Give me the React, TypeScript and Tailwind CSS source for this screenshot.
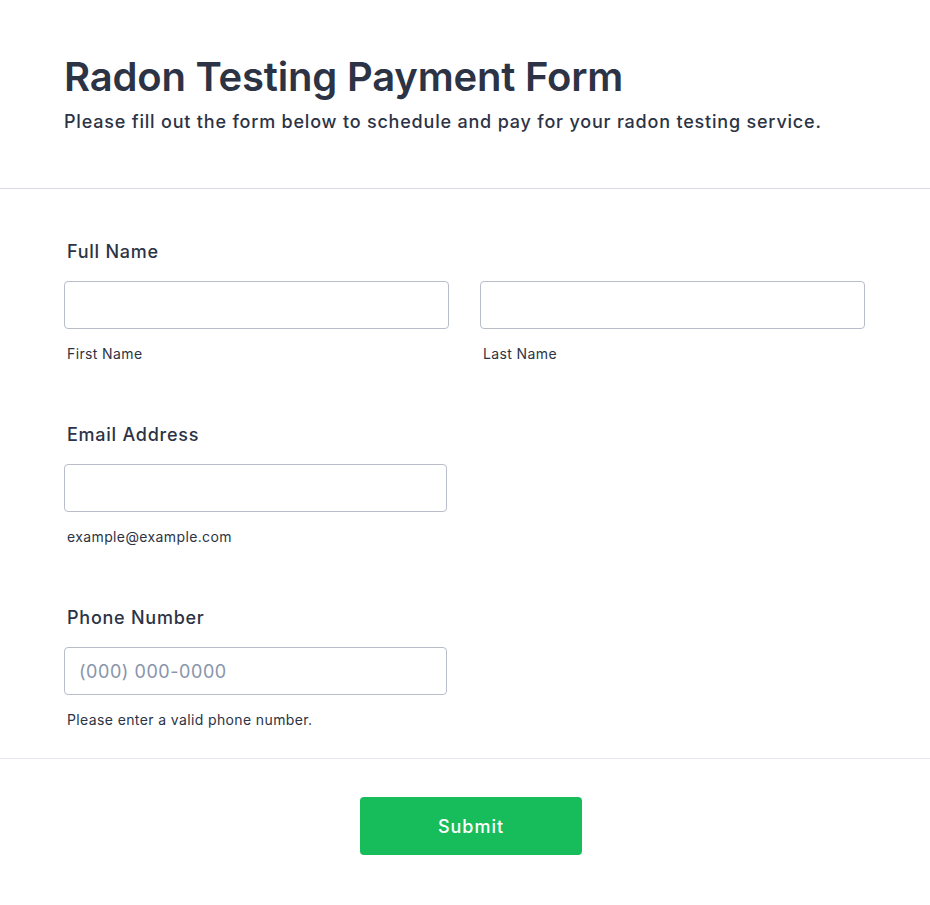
import React from 'react';

const font = { fontFamily: 'Inter, "Noto Sans", sans-serif' };

const Field: React.FC<{ label: string; children: React.ReactNode }> = ({ label, children }) => (
  <div className="mb-[55px] last:mb-0">
    <label className="block pl-[3px] text-[18px] leading-[31px] font-medium tracking-[0.75px] text-[#2c3345]">
      {label}
    </label>
    <div className="mt-[14px]">{children}</div>
  </div>
);

const inputClass =
  'block w-full h-[48px] rounded-[4px] border border-[#b8bdc9] bg-white px-[14px] text-[18px] tracking-[0.55px] text-[#2c3345] outline-none placeholder:text-[#8894ab]';

const SubLabel: React.FC<{ text: string }> = ({ text }) => (
  <div className="mt-[15px] pl-[3px] text-[14px] leading-[20px] tracking-[0.38px] text-[#2c3345]">{text}</div>
);

export default function App() {
  return (
    <div className="min-h-screen bg-white" style={font}>
      {/* Header */}
      <div className="px-[64px] pt-[53px] pb-[52px] border-b border-[#d8dae9]">
        <h1 className="text-[40px] leading-[48px] font-semibold tracking-[-0.2px] text-[#2c3345]">
          Radon Testing Payment Form
        </h1>
        <p className="mt-[7px] text-[18px] leading-[28px] font-medium tracking-[0.8px] text-[#2c3345]">
          Please fill out the form below to schedule and pay for your radon testing service.
        </p>
      </div>

      {/* Fields */}
      <div className="px-[64px] pt-[47px] pb-[28px] border-b border-[#e6e8f0]">
        <Field label="Full Name">
          <div className="grid grid-cols-2 gap-[31px] w-[801px]">
            <div>
              <input className={inputClass} type="text" />
              <SubLabel text="First Name" />
            </div>
            <div>
              <input className={inputClass} type="text" />
              <SubLabel text="Last Name" />
            </div>
          </div>
        </Field>

        <Field label="Email Address">
          <div className="w-[383px]">
            <input className={inputClass} type="email" />
            <SubLabel text="example@example.com" />
          </div>
        </Field>

        <Field label="Phone Number">
          <div className="w-[383px]">
            <input className={inputClass} type="tel" placeholder="(000) 000-0000" />
            <SubLabel text="Please enter a valid phone number." />
          </div>
        </Field>
      </div>

      {/* Submit */}
      <div className="flex justify-center pl-[12px] pt-[38px] pb-[50px]">
        <button
          type="submit"
          className="w-[222px] h-[58px] rounded-[4px] bg-[#18bd5b] text-white text-[18px] font-medium tracking-[1px]"
        >
          Submit
        </button>
      </div>
    </div>
  );
}
